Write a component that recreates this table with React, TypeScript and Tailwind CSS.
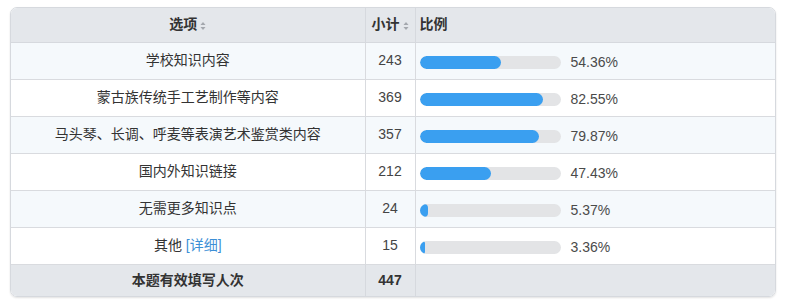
import React from "react";

const rows: { label: React.ReactNode; count: number; pct: string }[] = [
  { label: "学校知识内容", count: 243, pct: "54.36" },
  { label: "蒙古族传统手工艺制作等内容", count: 369, pct: "82.55" },
  { label: "马头琴、长调、呼麦等表演艺术鉴赏类内容", count: 357, pct: "79.87" },
  { label: "国内外知识链接", count: 212, pct: "47.43" },
  { label: "无需更多知识点", count: 24, pct: "5.37" },
  {
    label: (
      <>
        其他 <span className="text-[#3d8fd6]">[详细]</span>
      </>
    ),
    count: 15,
    pct: "3.36",
  },
];

function SortIcon() {
  return (
    <svg width="6" height="10" viewBox="0 0 6 10" className="inline-block ml-[3px] align-middle">
      <path d="M3 1 L5.5 4 L0.5 4 Z" fill="#a3a7ad" />
      <path d="M3 9 L5.5 6 L0.5 6 Z" fill="#a3a7ad" />
    </svg>
  );
}

export default function App() {
  const font = { fontFamily: '"Liberation Sans", "Noto Sans CJK SC", sans-serif' };
  return (
    <div className="w-[788px] h-[303px] bg-white pt-[7px] pl-[10px]" style={font}>
      <div className="w-[766px] border border-[#d6d9de] rounded-[7px] overflow-hidden shadow-[0_1px_2px_rgba(0,0,0,0.12)]">
        <table className="w-full border-collapse text-[14px] text-[#333]">
          <colgroup>
            <col className="w-[354px]" />
            <col className="w-[50px]" />
            <col />
          </colgroup>
          <thead>
            <tr className="h-[34px] bg-[#e4e7eb]">
              <th className="border-r border-b border-[#d6d9de] font-bold text-center">
                选项<SortIcon />
              </th>
              <th className="border-r border-b border-[#d6d9de] font-bold text-center whitespace-nowrap">
                小计<SortIcon />
              </th>
              <th className="border-b border-[#d6d9de] font-bold text-left pl-[4px]">比例</th>
            </tr>
          </thead>
          <tbody>
            {rows.map((r, i) => {
              const p = parseFloat(r.pct);
              return (
                <tr key={i} className={`h-[37px] ${i % 2 === 0 ? "bg-[#f5f9fc]" : "bg-white"}`}>
                  <td className="border-r border-b border-[#d9dbdf] text-center">{r.label}</td>
                  <td className="border-r border-b border-[#d9dbdf] text-center text-[#444]">{r.count}</td>
                  <td className="border-b border-[#d9dbdf] pl-[4px]">
                    <div className="flex items-center pt-[3px]">
                      <div className="w-[141px] h-[13px] rounded-full bg-[#e3e4e6] overflow-hidden">
                        <div
                          className="h-full rounded-full bg-[#3a9ff0]"
                          style={{ width: `${Math.max(5, (p * 150) / 100)}px` }}
                        />
                      </div>
                      <span className="ml-[10px] text-[#4a4a4a]">{r.pct}%</span>
                    </div>
                  </td>
                </tr>
              );
            })}
            <tr className="h-[32px] bg-[#e4e7eb]">
              <td className="border-r border-[#d6d9de] text-center font-bold">本题有效填写人次</td>
              <td className="border-r border-[#d6d9de] text-center font-bold">447</td>
              <td></td>
            </tr>
          </tbody>
        </table>
      </div>
    </div>
  );
}
